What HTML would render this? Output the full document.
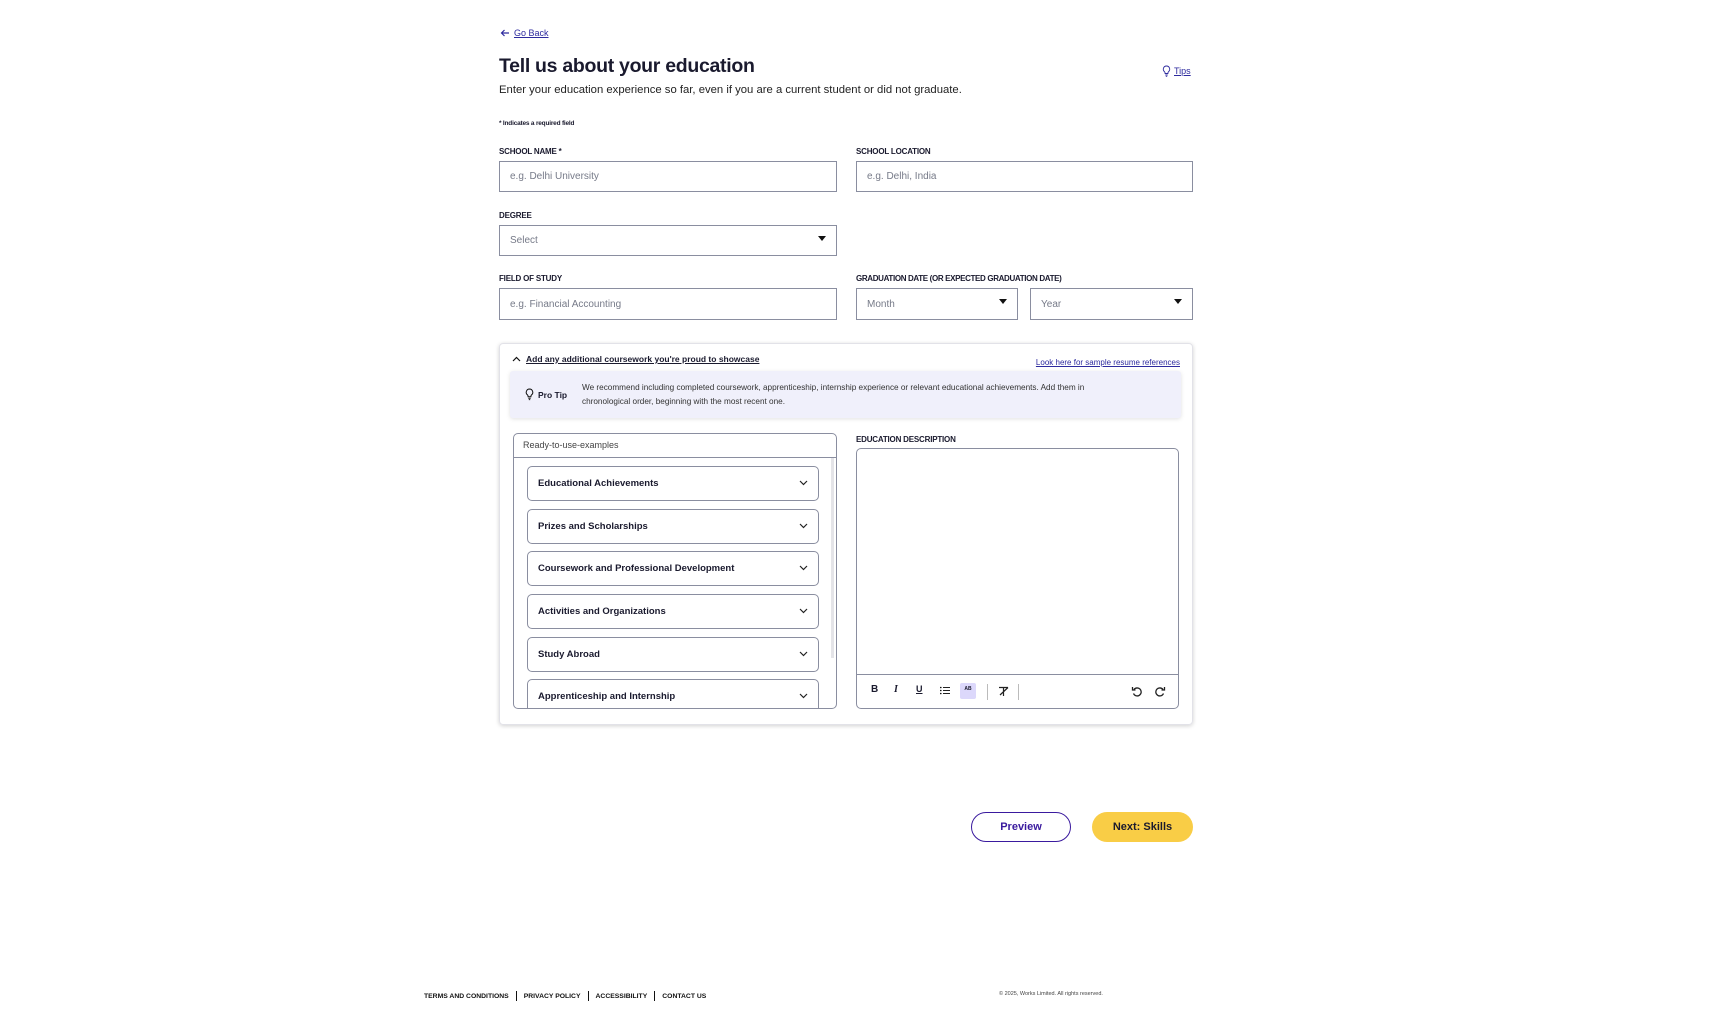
<!DOCTYPE html>
<html><head><meta charset="utf-8"><style>
*{box-sizing:border-box;margin:0;padding:0}
body{width:1730px;height:1010px;background:#fff;font-family:"Liberation Sans",sans-serif;color:#1a1a2e;position:relative;overflow:hidden}
.a{position:absolute}
.lbl{font-size:8px;font-weight:bold;letter-spacing:-0.2px}
.inp{border:1px solid #8a8ea0;background:#fff;font-size:10px;color:#767a88;padding-left:10px;display:flex;align-items:center}
.caret{position:absolute;right:10px;top:50%;margin-top:-5px;width:0;height:0;border-left:4px solid transparent;border-right:4px solid transparent;border-top:5px solid #111}
.link{color:#2d2a9e;text-decoration:underline}
.item{position:absolute;left:13px;width:292px;height:35px;border:1px solid #8a8ea0;border-radius:5px;font-size:9.5px;font-weight:bold;padding-left:10px;display:flex;align-items:center;background:#fff}
.item svg{position:absolute;right:10px;top:13px}
.tb{position:absolute;top:684px;font-size:10px;font-weight:bold}
</style></head><body>

<div class="a" style="left:500px;top:28px;font-size:9px;display:flex;align-items:center">
<svg width="10" height="10" viewBox="0 0 10 10"><path d="M9 5H1.5M4.5 2L1.5 5l3 3" stroke="#2d2a9e" stroke-width="1.2" fill="none"/></svg>
<span class="link" style="margin-left:4px">Go Back</span></div>

<div class="a" style="left:499px;top:55px;font-size:19.5px;font-weight:bold;letter-spacing:-0.3px">Tell us about your education</div>
<div class="a" style="left:499px;top:84px;font-size:11.3px;color:#222">Enter your education experience so far, even if you are a current student or did not graduate.</div>
<div class="a" style="left:1162px;top:65px;font-size:9px;display:flex;align-items:center">
<svg width="9" height="12" viewBox="0 0 9 12"><path d="M4.5 1a3.2 3.2 0 0 0-2 5.7c.5.5.6 1 .6 1.8h2.8c0-.8.1-1.3.6-1.8a3.2 3.2 0 0 0-2-5.7zM3.3 10h2.4M3.8 11.3h1.4" stroke="#2d2a9e" stroke-width=".9" fill="none"/></svg>
<span class="link" style="margin-left:3px">Tips</span></div>

<div class="a lbl" style="left:499px;top:120px;font-size:6.5px">* Indicates a required field</div>

<div class="a lbl" style="left:499px;top:147px">SCHOOL NAME *</div>
<div class="a inp" style="left:499px;top:161px;width:338px;height:31px">e.g. Delhi University</div>
<div class="a lbl" style="left:856px;top:147px">SCHOOL LOCATION</div>
<div class="a inp" style="left:856px;top:161px;width:337px;height:31px">e.g. Delhi, India</div>

<div class="a lbl" style="left:499px;top:211px">DEGREE</div>
<div class="a inp" style="left:499px;top:225px;width:338px;height:31px">Select<span class="caret"></span></div>

<div class="a lbl" style="left:499px;top:274px">FIELD OF STUDY</div>
<div class="a inp" style="left:499px;top:288px;width:338px;height:32px">e.g. Financial Accounting</div>
<div class="a lbl" style="left:856px;top:274px;letter-spacing:-0.35px">GRADUATION DATE (OR EXPECTED GRADUATION DATE)</div>
<div class="a inp" style="left:856px;top:288px;width:162px;height:32px">Month<span class="caret"></span></div>
<div class="a inp" style="left:1030px;top:288px;width:163px;height:32px">Year<span class="caret"></span></div>

<!-- card -->
<div class="a" style="left:499px;top:343px;width:694px;height:382px;border:1px solid #e2e2e8;border-radius:4px;box-shadow:0 1px 4px rgba(0,0,0,.18)"></div>
<div class="a" style="left:512px;top:354px;font-size:8.5px;font-weight:bold;display:flex;align-items:center">
<svg width="9" height="8" viewBox="0 0 9 8"><path d="M1 6l3.5-3.5L8 6" stroke="#111" stroke-width="1.2" fill="none"/></svg>
<span style="text-decoration:underline;margin-left:5px">Add any additional coursework you're proud to showcase</span></div>
<div class="a link" style="left:1010px;top:358px;font-size:8px;width:170px;text-align:right">Look here for sample resume references</div>

<div class="a" style="left:510px;top:371px;width:671px;height:47px;background:#f0f0fb;border-radius:3px;box-shadow:0 1px 4px rgba(0,0,0,.12)"></div>
<div class="a" style="left:525px;top:388px;display:flex;align-items:center;font-size:8.5px;font-weight:bold">
<svg width="9" height="13" viewBox="0 0 9 13"><path d="M4.5 1a3.3 3.3 0 0 0-2 5.9c.5.5.6 1 .6 1.9h2.8c0-.9.1-1.4.6-1.9a3.3 3.3 0 0 0-2-5.9zM3.3 10.2h2.4M3.8 11.6h1.4" stroke="#111" stroke-width="1" fill="none"/></svg>
<span style="margin-left:4px">Pro Tip</span></div>
<div class="a" style="left:582px;top:381px;width:545px;font-size:8.2px;line-height:14px;color:#333">We recommend including completed coursework, apprenticeship, internship experience or relevant educational achievements. Add them in chronological order, beginning with the most recent one.</div>

<!-- left examples panel -->
<div class="a" style="left:513px;top:433px;width:324px;height:276px;border:1px solid #8a8ea0;border-radius:5px;overflow:hidden">
<div style="height:24px;border-bottom:1px solid #8a8ea0;font-size:9px;color:#444;padding:6px 0 0 9px">Ready-to-use-examples</div>
<div style="position:absolute;right:2px;top:24px;width:3px;height:200px;background:#e4e4e8"></div>
<div class="item" style="top:32px">Educational Achievements<svg width="9" height="6" viewBox="0 0 9 6"><path d="M1 1l3.5 3.5L8 1" stroke="#222" stroke-width="1.2" fill="none"/></svg></div>
<div class="item" style="top:75px">Prizes and Scholarships<svg width="9" height="6" viewBox="0 0 9 6"><path d="M1 1l3.5 3.5L8 1" stroke="#222" stroke-width="1.2" fill="none"/></svg></div>
<div class="item" style="top:117px">Coursework and Professional Development<svg width="9" height="6" viewBox="0 0 9 6"><path d="M1 1l3.5 3.5L8 1" stroke="#222" stroke-width="1.2" fill="none"/></svg></div>
<div class="item" style="top:160px">Activities and Organizations<svg width="9" height="6" viewBox="0 0 9 6"><path d="M1 1l3.5 3.5L8 1" stroke="#222" stroke-width="1.2" fill="none"/></svg></div>
<div class="item" style="top:203px">Study Abroad<svg width="9" height="6" viewBox="0 0 9 6"><path d="M1 1l3.5 3.5L8 1" stroke="#222" stroke-width="1.2" fill="none"/></svg></div>
<div class="item" style="top:245px">Apprenticeship and Internship<svg width="9" height="6" viewBox="0 0 9 6"><path d="M1 1l3.5 3.5L8 1" stroke="#222" stroke-width="1.2" fill="none"/></svg></div>
</div>

<!-- editor -->
<div class="a lbl" style="left:856px;top:435px">EDUCATION DESCRIPTION</div>
<div class="a" style="left:856px;top:448px;width:323px;height:261px;border:1px solid #8a8ea0;border-radius:5px"></div>
<div class="a" style="left:857px;top:674px;width:321px;height:1px;background:#8a8ea0"></div>
<div class="tb" style="left:871px">B</div>
<div class="tb" style="left:894px;font-style:italic;font-family:'Liberation Serif',serif">I</div>
<div class="tb" style="left:916px;text-decoration:underline;font-size:9px">U</div>
<svg class="a" style="left:940px;top:686px" width="10" height="9" viewBox="0 0 10 9"><path d="M3 1.5h7M3 4.5h7M3 7.5h7" stroke="#222" stroke-width="1"/><circle cx=".8" cy="1.5" r=".8"/><circle cx=".8" cy="4.5" r=".8"/><circle cx=".8" cy="7.5" r=".8"/></svg>
<div class="a" style="left:960px;top:683px;width:16px;height:16px;background:#dcd8fb;border-radius:2px;font-size:5px;font-weight:bold;text-align:center;padding-top:3px">AB</div>
<div class="a" style="left:987px;top:684px;width:1px;height:16px;background:#bbb"></div>
<svg class="a" style="left:998px;top:686px" width="12" height="11" viewBox="0 0 12 11"><path d="M1 1.5h9M5.5 1.5v8.5M2 9l8-7.5" stroke="#222" stroke-width="1.2" fill="none"/></svg>
<div class="a" style="left:1018px;top:684px;width:1px;height:16px;background:#bbb"></div>
<svg class="a" style="left:1131px;top:686px" width="11" height="11" viewBox="0 0 11 11"><path d="M3 3.5A4 4 0 1 1 2.5 7.5M1.5 1v3h3" stroke="#222" stroke-width="1.3" fill="none"/></svg>
<svg class="a" style="left:1155px;top:686px" width="11" height="11" viewBox="0 0 11 11"><path d="M8 3.5A4 4 0 1 0 8.5 7.5M9.5 1v3h-3" stroke="#222" stroke-width="1.3" fill="none"/></svg>

<!-- buttons -->
<div class="a" style="left:971px;top:812px;width:100px;height:30px;border:1.5px solid #3a1a9e;border-radius:16px;color:#3a1a9e;font-size:11px;font-weight:bold;display:flex;align-items:center;justify-content:center">Preview</div>
<div class="a" style="left:1092px;top:812px;width:101px;height:30px;background:#f9cd46;border-radius:16px;font-size:11px;font-weight:bold;display:flex;align-items:center;justify-content:center">Next: Skills</div>

<!-- footer -->
<div class="a" style="left:424px;top:991px;font-size:6.8px;font-weight:bold;display:flex;align-items:center;color:#111">
<span>TERMS AND CONDITIONS</span><span style="width:1px;height:10px;background:#111;margin:0 7px"></span>
<span>PRIVACY POLICY</span><span style="width:1px;height:10px;background:#111;margin:0 7px"></span>
<span>ACCESSIBILITY</span><span style="width:1px;height:10px;background:#111;margin:0 7px"></span>
<span>CONTACT US</span></div>
<div class="a" style="left:999px;top:991px;font-size:5.5px;color:#444">© 2025, Works Limited. All rights reserved.</div>
</body></html>
